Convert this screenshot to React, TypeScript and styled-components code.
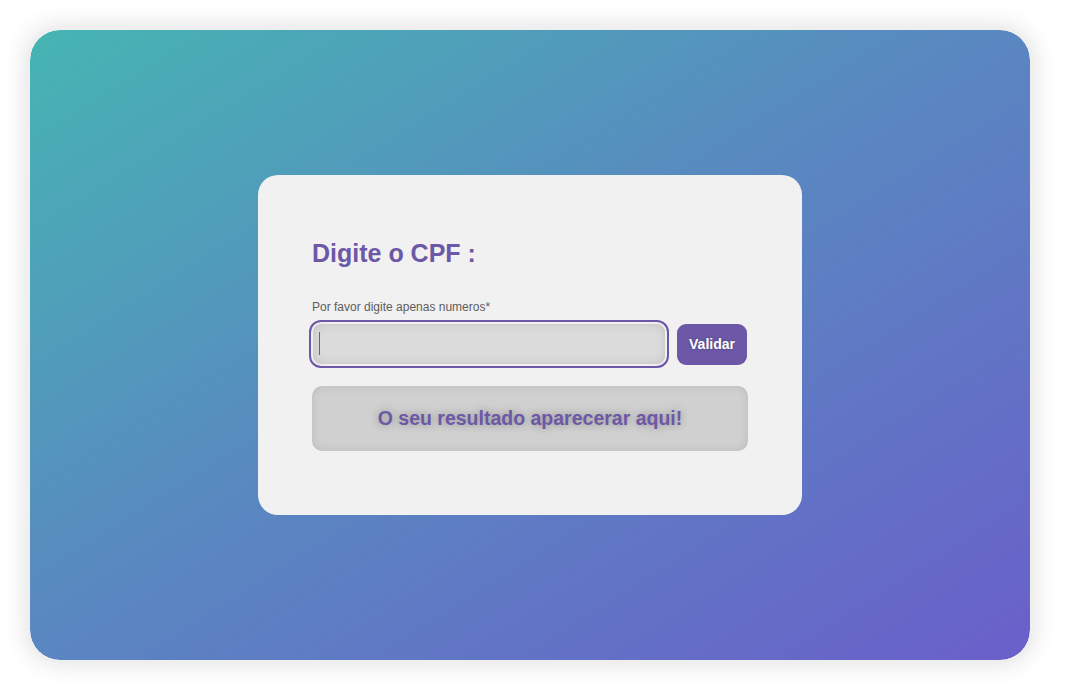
import React from "react";
import styled, { createGlobalStyle } from "styled-components";

const Global = createGlobalStyle`
  html, body { margin: 0; padding: 0; background: #ffffff; }
  body { font-family: "Liberation Sans", Arial, sans-serif; }
  * { box-sizing: border-box; }
`;

const Page = styled.div`
  padding: 26px;
  width: 1068px;
  height: 698px;
`;

const Frame = styled.div`
  width: 1008px;
  height: 638px;
  border: 4px solid #efefef;
  border-radius: 34px;
  box-shadow: 0 0 24px rgba(0, 0, 0, 0.12);
  overflow: hidden;
`;

const Backdrop = styled.div`
  width: 100%;
  height: 100%;
  border-radius: 30px;
  background: linear-gradient(to bottom right, #46b5b3 0%, #5a86c1 50%, #6a5fca 100%);
  display: flex;
  align-items: center;
  justify-content: center;
`;

const Card = styled.div`
  width: 544px;
  height: 340px;
  background: #f1f1f1;
  border-radius: 20px;
  padding: 64px 54px 0 54px;
  display: flex;
  flex-direction: column;
`;

const Title = styled.h2`
  margin: 0;
  font-size: 25px;
  font-weight: 700;
  color: #6c58a6;
  line-height: 29px;
`;

const Label = styled.label`
  margin-top: 32px;
  font-size: 12px;
  line-height: 14px;
  color: #5d5d5d;
`;

const Row = styled.div`
  margin-top: 6px;
  display: flex;
  align-items: center;
  gap: 8px;
  margin-left: -3px;
`;

const InputWrap = styled.div`
  position: relative;
`;

const Input = styled.input`
  width: 360px;
  height: 48px;
  border: 2px solid #6c58a6;
  border-radius: 12px;
  background: #dbdbdb;
  box-shadow: inset 0 0 0 2px #efefef, inset 0 0 12px rgba(0, 0, 0, 0.16);
  padding: 0 10px;
  font-size: 16px;
  outline: none;
  caret-color: #6c58a6;
`;

const Caret = styled.span`
  position: absolute;
  left: 10px;
  top: 12px;
  width: 1px;
  height: 23px;
  background: #6c58a6;
`;

const Button = styled.button`
  width: 70px;
  height: 41px;
  border: none;
  border-radius: 9px;
  background: #6c58a6;
  color: #ffffff;
  font-family: "Liberation Sans", Arial, sans-serif;
  font-size: 14px;
  font-weight: 700;
  text-shadow: 0 0 3px rgba(0, 0, 0, 0.25);
  cursor: pointer;
`;

const Result = styled.div`
  margin-top: 18px;
  height: 65px;
  border-radius: 10px;
  background: #d0d0d0;
  box-shadow: inset 0 0 10px rgba(0, 0, 0, 0.1);
  display: flex;
  align-items: center;
  justify-content: center;
  font-size: 19.5px;
  font-weight: 700;
  color: #6c58a6;
  text-shadow: 0 0 8px rgba(0, 0, 0, 0.35);
`;

export default function App() {
  return (
    <Page>
      <Global />
      <Frame>
        <Backdrop>
          <Card>
            <Title>Digite o CPF :</Title>
            <Label>Por favor digite apenas numeros*</Label>
            <Row>
              <InputWrap>
                <Input type="text" />
                <Caret />
              </InputWrap>
              <Button>Validar</Button>
            </Row>
            <Result>O seu resultado aparecerar aqui!</Result>
          </Card>
        </Backdrop>
      </Frame>
    </Page>
  );
}
